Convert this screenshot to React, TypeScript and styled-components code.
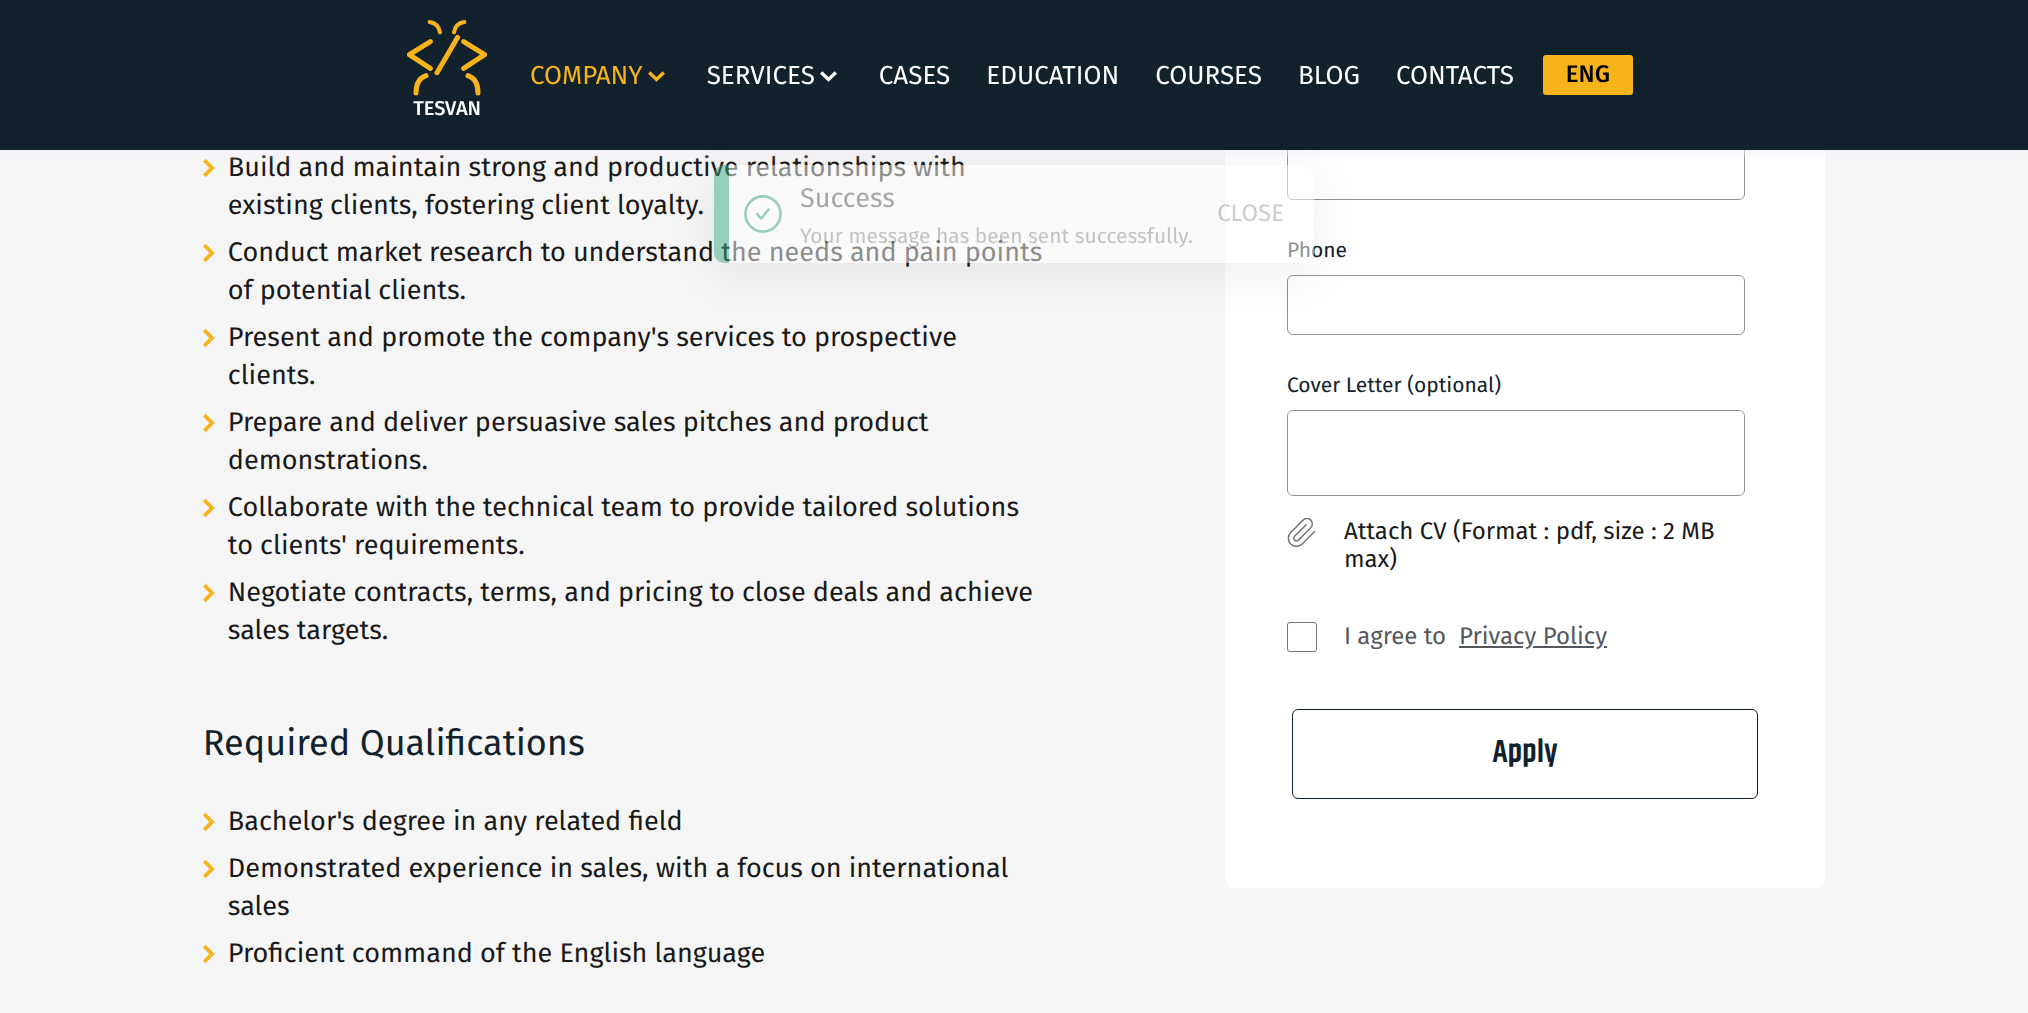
import React from 'react';
import styled, { createGlobalStyle, css } from 'styled-components';

const ink = '#12222c';
const amber = '#f7b31a';
const green = '#3da981';
const sans = '"Fira Sans", "Noto Sans", sans-serif';

const GlobalStyle = createGlobalStyle`
  *, *::before, *::after { box-sizing: border-box; }
  body {
    margin: 0;
    background: #f5f5f5;
    color: #191919;
    font-family: ${sans};
    text-rendering: geometricPrecision;
  }
  button, input, textarea { font-family: inherit; text-rendering: inherit; }
`;

const Header = styled.header`
  position: fixed;
  inset: 0 0 auto 0;
  z-index: 10;
  height: 150px;
  padding-left: 12px;
  display: flex;
  align-items: center;
  justify-content: center;
  background: ${ink};
  box-shadow: 0 2px 10px #f6f0fd;
`;

const Logo = styled.a`
  width: 80px;
  margin-right: 43px;
  padding-bottom: 9px;
  display: flex;
  flex-direction: column;
  align-items: center;
  gap: 1px;
  color: #fff;
  font-size: 20px;
  font-weight: 500;
  line-height: 24px;
  text-decoration: none;
`;

const Nav = styled.nav`
  display: flex;
  align-items: center;
  gap: 36px;
  padding-top: 2px;
`;

const navItem = css<{ $active?: boolean }>`
  color: ${p => (p.$active ? amber : '#fff')};
  font-size: 26px;
  font-weight: 400;
  line-height: 32px;
`;

const NavLink = styled.a`
  ${navItem}
  text-decoration: none;
`;

const NavMenu = styled.button<{ $active?: boolean }>`
  ${navItem}
  display: flex;
  align-items: center;
  gap: 5px;
  padding: 0 6px 0 0;
  border: 0;
  background: none;
`;

const LangButton = styled.button`
  width: 90px;
  height: 40px;
  margin-left: 29px;
  padding: 0;
  border: 0;
  border-radius: 3px;
  background: ${amber};
  color: #000;
  font-size: 24px;
  font-weight: 500;
`;

const Main = styled.main`
  display: flex;
  align-items: flex-start;
  justify-content: space-between;
  min-height: 100vh;
  padding: 0 10%;
`;

const Details = styled.section`
  width: 52%;
  padding-top: 149px;
`;

const Heading = styled.h2`
  margin: 71px 0 38px;
  color: ${ink};
  font-size: 36px;
  font-weight: 400;
  line-height: 44px;
`;

const List = styled.ul`
  display: flex;
  flex-direction: column;
  gap: 9px;
  margin: 0;
  padding: 0;
  list-style: none;
`;

const Item = styled.li`
  display: flex;
  gap: 13px;
  font-size: 27px;
  line-height: 38px;

  svg { flex: none; height: 38px; }
`;

const Card = styled.form`
  width: 37%;
  margin-top: 100px;
  padding: 40px 62px 89px;
  border-radius: 8px;
  background: #fff;
`;

const Fields = styled.div`
  display: flex;
  flex-direction: column;
  gap: 38px;
  padding-right: 18px;
`;

const Field = styled.div`
  display: flex;
  flex-direction: column;
  gap: 12px;
`;

const Label = styled.label`
  color: ${ink};
  font-size: 21px;
  line-height: 25px;
`;

const box = css`
  display: block;
  width: 100%;
  padding: 12px;
  border: 1px solid #909295;
  border-radius: 6px;
  background: transparent;
  font-size: 21px;
`;

const Input = styled.input`
  ${box}
  height: 60px;
`;

const TextArea = styled.textarea`
  ${box}
  height: 86px;
  resize: none;
`;

const AttachRow = styled.label`
  display: flex;
  align-items: flex-start;
  gap: 28px;
  margin-top: 22px;
  padding-right: 18px;
  font-size: 24px;
  line-height: 28px;

  svg { flex: none; }
`;

const FileInput = styled.input`
  display: none;
`;

const AgreeRow = styled.div`
  display: flex;
  align-items: center;
  gap: 27px;
  margin-top: 48px;
  color: #54585c;
  font-size: 24px;
  line-height: 28px;
`;

const AgreeText = styled.div`
  display: flex;
  gap: 13px;
`;

const Check = styled.input`
  appearance: none;
  flex: none;
  width: 30px;
  height: 30px;
  margin: 0;
  border: 1px solid #72777c;
  border-radius: 3px;
  background: #fff;
`;

const PolicyLink = styled.a`
  color: inherit;
`;

const ApplyRow = styled.div`
  display: flex;
  margin-top: 57px;
  padding: 0 5px;
`;

const ApplyButton = styled.button`
  flex: 1;
  height: 90px;
  padding: 0 0 2px;
  border: 1px solid ${ink};
  border-radius: 6px;
  background: #fff;
  color: ${ink};
  font-family: Khand, "Roboto Condensed", ${sans};
  font-size: 32px;
  font-weight: 600;
`;

const Toast = styled.div`
  position: fixed;
  top: 165px;
  left: 50%;
  z-index: 20;
  width: 600px;
  height: 98px;
  margin-left: -300px;
  padding: 0 30px 0 15px;
  display: flex;
  align-items: center;
  border-left: 15px solid ${green};
  border-radius: 10px;
  background: #fff;
  box-shadow: 0 10px 50px rgba(0, 0, 0, 0.14);
  opacity: 0.5;
`;

const ToastText = styled.div`
  flex: 1;
  display: flex;
  flex-direction: column;
  gap: 7px;
  padding: 2px 0 0 18px;
`;

const ToastTitle = styled.strong`
  color: #585b60;
  font-size: 27px;
  font-weight: 400;
  line-height: 34px;
`;

const ToastMessage = styled.span`
  color: #909090;
  font-size: 21px;
  line-height: 26px;
`;

const ToastClose = styled.button`
  padding: 0;
  border: 0;
  background: none;
  color: #9a9a9a;
  font-size: 24px;
`;

const MenuArrow = () => (
  <svg width="17" height="11" viewBox="0 0 17 11" fill="none" stroke="currentColor" strokeWidth="3.4">
    <path d="M1.2 1.4 8.5 8.4 15.8 1.4" />
  </svg>
);

const Bullet = () => (
  <svg width="12" height="18" viewBox="0 0 12 18" fill="none" stroke={amber} strokeWidth="3.8">
    <path d="M1.3 1.2 9 9 1.3 16.8" />
  </svg>
);

const BugMark = () => (
  <svg width="80" height="76" viewBox="51 60 240 228" fill="none" stroke={amber} strokeWidth="15" strokeLinecap="round" strokeLinejoin="round">
    <path d="M119 66Q145 70 150 97M223 66Q196 70 192 97" strokeWidth="12" />
    <path d="M121 125 58 164 121 205M221 125 284 164 221 205" />
    <path d="M203 112 141 218" />
    <path d="M108 227Q78 237 78 279M234 227Q264 237 264 279" />
  </svg>
);

const Paperclip = () => (
  <svg width="29" height="29" viewBox="1.5 1 20.5 21.5" fill="none" stroke="#72777c" strokeWidth="1.1" strokeLinecap="round" strokeLinejoin="round">
    <path d="m21.44 11.05-9.19 9.19a6 6 0 0 1-8.49-8.49l9.19-9.19a4 4 0 0 1 5.66 5.66l-9.2 9.19a2 2 0 0 1-2.83-2.83l8.49-8.48" />
  </svg>
);

const SuccessIcon = () => (
  <svg width="38" height="38" viewBox="0 0 38 38" fill="none" stroke={green} strokeWidth="2.6" strokeLinecap="round" strokeLinejoin="round">
    <circle cx="19" cy="19" r="17.6" />
    <path d="m13.3 19.3 4 4.2 7.3-9" />
  </svg>
);

const duties = [
  'Build and maintain strong and productive relationships with existing clients, fostering client loyalty.',
  'Conduct market research to understand the needs and pain points of potential clients.',
  "Present and promote the company's services to prospective clients.",
  'Prepare and deliver persuasive sales pitches and product demonstrations.',
  "Collaborate with the technical team to provide tailored solutions to clients' requirements.",
  'Negotiate contracts, terms, and pricing to close deals and achieve sales targets.',
];

const qualifications = [
  "Bachelor's degree in any related field",
  'Demonstrated experience in sales, with a focus on international sales',
  'Proficient command of the English language',
];

const links = ['CASES', 'EDUCATION', 'COURSES', 'BLOG', 'CONTACTS'];

const BulletList = ({ items }: { items: string[] }) => (
  <List>
    {items.map(text => (
      <Item key={text}>
        <Bullet />
        <span>{text}</span>
      </Item>
    ))}
  </List>
);

export default function App() {
  return (
    <>
      <GlobalStyle />
      <Header>
        <Logo href="#home">
          <BugMark />
          TESVAN
        </Logo>
        <Nav>
          <NavMenu type="button" $active>COMPANY<MenuArrow /></NavMenu>
          <NavMenu type="button">SERVICES<MenuArrow /></NavMenu>
          {links.map(name => (
            <NavLink key={name} href={`#${name.toLowerCase()}`}>{name}</NavLink>
          ))}
        </Nav>
        <LangButton type="button">ENG</LangButton>
      </Header>

      <Main>
        <Details>
          <BulletList items={duties} />
          <Heading>Required Qualifications</Heading>
          <BulletList items={qualifications} />
        </Details>

        <Card onSubmit={e => e.preventDefault()}>
          <Fields>
            <Input type="email" aria-label="Email" />
            <Field>
              <Label htmlFor="phone">Phone</Label>
              <Input id="phone" type="tel" />
            </Field>
            <Field>
              <Label htmlFor="letter">Cover Letter (optional)</Label>
              <TextArea id="letter" />
            </Field>
          </Fields>
          <AttachRow>
            <FileInput type="file" accept=".pdf" />
            <Paperclip />
            <span>Attach CV (Format : pdf, size : 2 MB max)</span>
          </AttachRow>
          <AgreeRow>
            <Check id="agree" type="checkbox" />
            <AgreeText>
              <label htmlFor="agree">I agree to</label>
              <PolicyLink href="#privacy">Privacy Policy</PolicyLink>
            </AgreeText>
          </AgreeRow>
          <ApplyRow>
            <ApplyButton type="submit">Apply</ApplyButton>
          </ApplyRow>
        </Card>
      </Main>

      <Toast role="status">
        <SuccessIcon />
        <ToastText>
          <ToastTitle>Success</ToastTitle>
          <ToastMessage>Your message has been sent successfully.</ToastMessage>
        </ToastText>
        <ToastClose type="button">CLOSE</ToastClose>
      </Toast>
    </>
  );
}
